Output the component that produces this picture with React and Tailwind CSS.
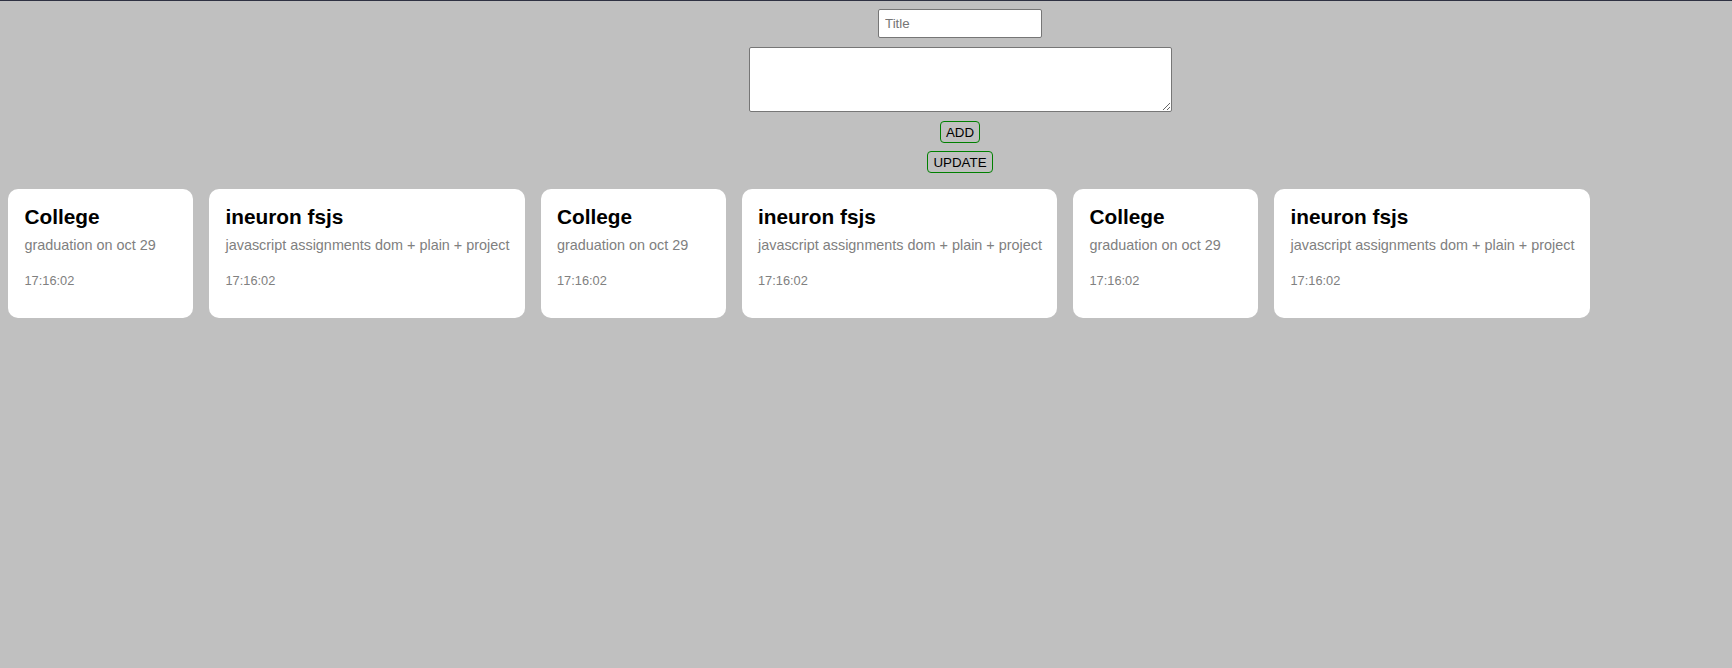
import React from 'react';

const notes = [
    { title: 'College', body: 'graduation on oct 29', time: '17:16:02', w: 'w-[185px]' },
    { title: 'ineuron fsjs', body: 'javascript assignments dom + plain + project', time: '17:16:02', w: 'w-[315.5px]' },
    { title: 'College', body: 'graduation on oct 29', time: '17:16:02', w: 'w-[185px]' },
    { title: 'ineuron fsjs', body: 'javascript assignments dom + plain + project', time: '17:16:02', w: 'w-[315.5px]' },
    { title: 'College', body: 'graduation on oct 29', time: '17:16:02', w: 'w-[185px]' },
    { title: 'ineuron fsjs', body: 'javascript assignments dom + plain + project', time: '17:16:02', w: 'w-[315.5px]' },
];

const NoteCard = ({ note }) => (
    <div className={`${note.w} bg-white rounded-[10px] pl-[16.5px] pr-2 pt-[16px] pb-[30px] shrink-0`}>
        <h2 className="text-[20.8px] leading-[24px] font-bold text-black">{note.title}</h2>
        <p className="mt-2 text-[14.4px] leading-[16px] text-[#808080] whitespace-nowrap">{note.body}</p>
        <p className="mt-[21px] text-[12.8px] leading-[14px] text-[#808080]">{note.time}</p>
    </div>
);

const App = () => {
    return (
        <div
            className="min-h-screen bg-[#c0c0c0] border-t border-[#2e3142]"
            style={{ fontFamily: '"Liberation Sans", Arial, sans-serif' }}
        >
            {/* form */}
            <div className="flex flex-col items-center pl-[188px] pt-2">
                <input
                    type="text"
                    placeholder="Title"
                    className="w-[164px] h-[29px] bg-white border border-[#767676] rounded-[2px] px-[6px] text-[13.33px] text-black placeholder:text-[#757575] outline-none"
                />
                <textarea className="mt-[9px] w-[423px] h-[65px] bg-white border border-[#767676] rounded-[2px] px-1 py-[2px] text-[13.33px] outline-none block" />
                <button className="mt-[9px] h-[22px] px-[5px] border border-[#008000] rounded-[4px] text-[13.33px] leading-[15px] text-black bg-transparent">
                    ADD
                </button>
                <button className="mt-2 h-[22px] px-[5px] border border-[#008000] rounded-[4px] text-[13.33px] leading-[15px] text-black bg-transparent">
                    UPDATE
                </button>
            </div>

            {/* notes */}
            <div className="flex flex-wrap gap-4 pl-2 mt-4">
                {notes.map((n, i) => (
                    <NoteCard key={i} note={n} />
                ))}
            </div>
        </div>
    );
};

export default App;
